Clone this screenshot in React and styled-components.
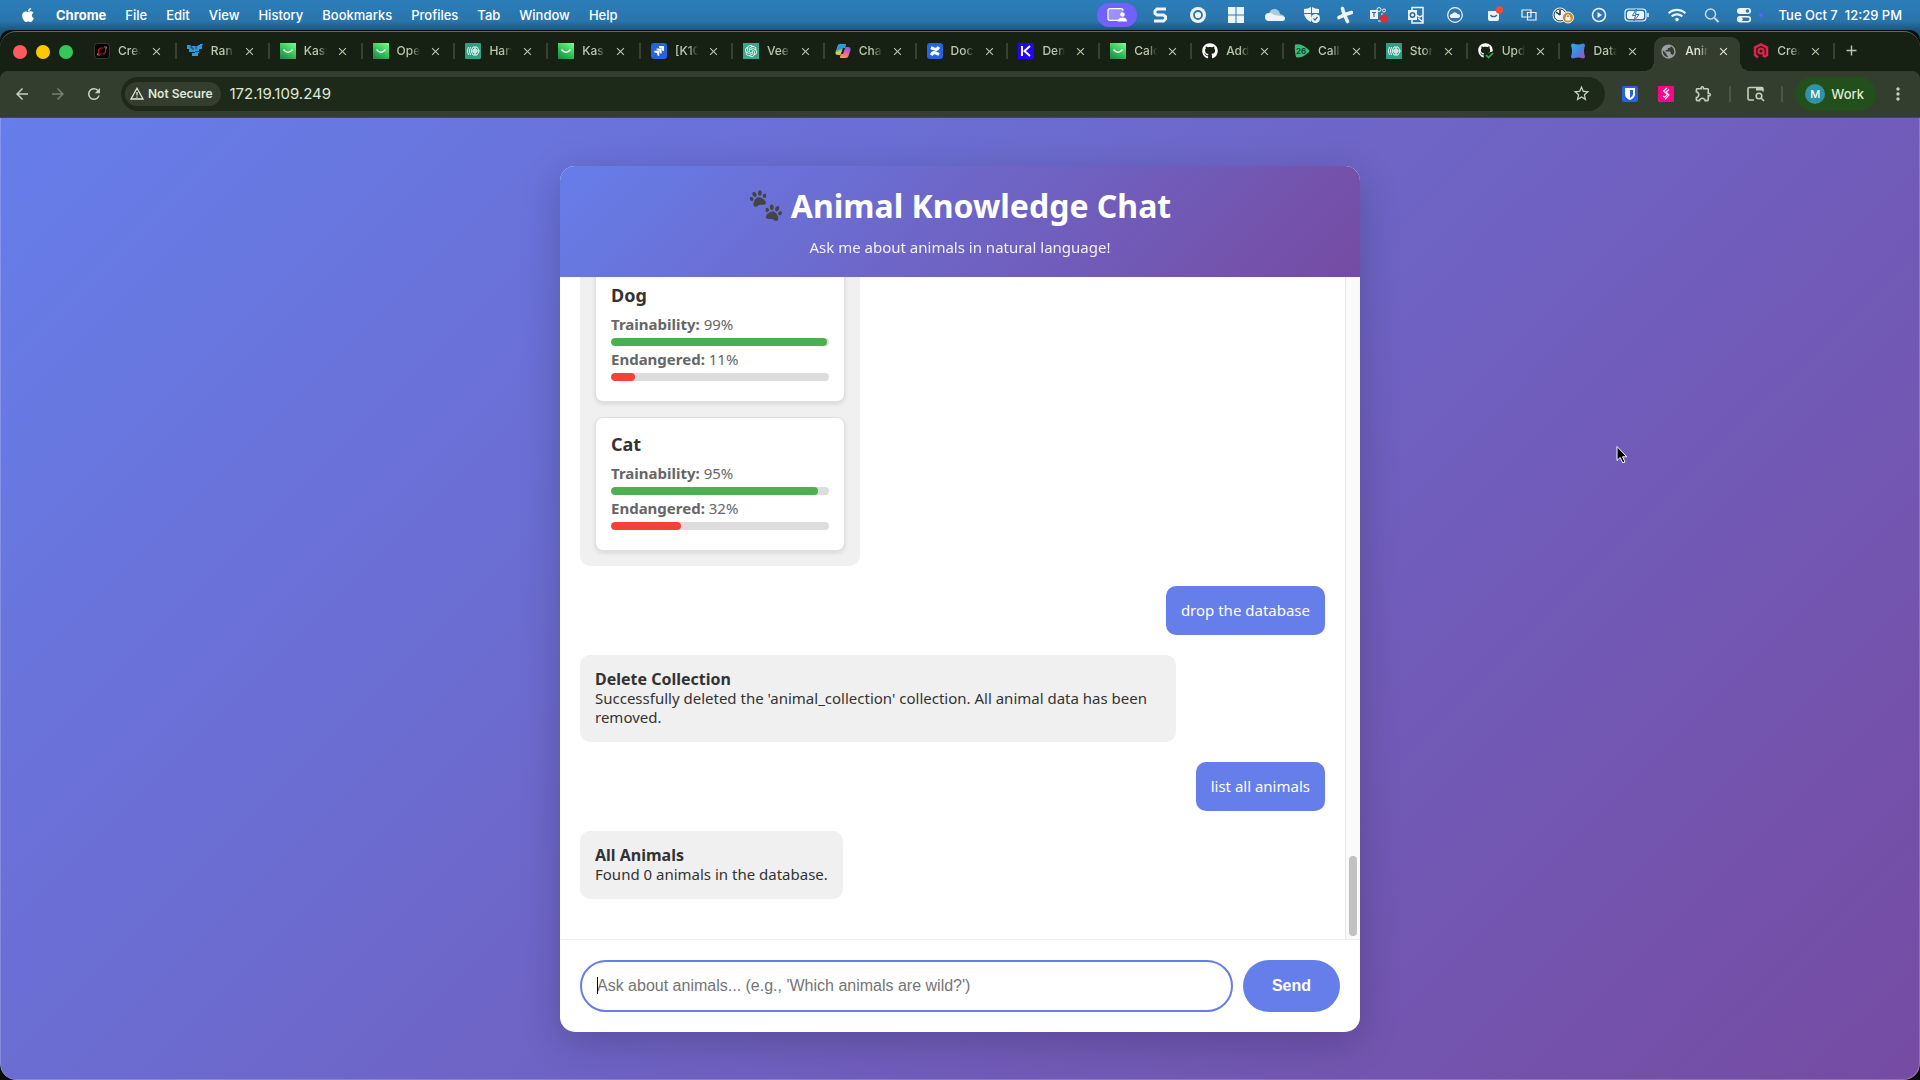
import React from "react";
import styled, { createGlobalStyle } from "styled-components";
import { FaApple, FaGithub, FaPaw, FaWifi } from "react-icons/fa";
import { SiConfluence, SiJira, SiOpenai } from "react-icons/si";
import {
  MdAdd,
  MdArrowBack,
  MdArrowForward,
  MdClose,
  MdMoreVert,
  MdOutlineExtension,
  MdPublic,
  MdRefresh,
  MdStarBorder,
} from "react-icons/md";

const GlobalStyle = createGlobalStyle`
  * {
    box-sizing: border-box;
  }
  body {
    margin: 0;
    font-family: Inter, Roboto, sans-serif;
  }
  button {
    border: none;
    background: none;
    padding: 0;
    font: inherit;
    color: inherit;
  }
  svg {
    display: block;
    flex: none;
  }
  h1, h2, h3, p {
    margin: 0;
  }
`;

const Desktop = styled.div`
  height: 100vh;
  display: flex;
  flex-direction: column;
  background: #1c567e;
  overflow: hidden;
`;

/* ---------- menu bar ---------- */

const MenuBar = styled.header`
  display: flex;
  justify-content: space-between;
  height: 30px;
  padding: 0 18px 0 20px;
  background: linear-gradient(#2b7eb9, #2a75ac 70%, #1c567e);
  color: white;
  font-size: 13px;
  font-weight: 500;
`;
const Menus = styled.nav`
  display: flex;
  align-items: center;
  gap: 19px;
`;
const MenuItem = styled.button`
  margin-left: ${(props) => (props.$bold ? 1 : 0)}px;
  font-weight: ${(props) => (props.$bold ? 700 : 500)};
`;
const Status = styled.div`
  display: flex;
  align-items: center;
`;
const StatusSlot = styled.div`
  display: flex;
  justify-content: center;
  width: ${(props) => props.$width}px;
`;
const SharePill = styled.div`
  display: flex;
  align-items: center;
  justify-content: center;
  width: 40px;
  height: 24px;
  margin-right: 4px;
  border-radius: 12px;
  background: #7161ff;
`;
const Clock = styled.div`
  display: flex;
  gap: 7px;
  margin-left: 16px;
`;

/* ---------- browser window ---------- */

const Backdrop = styled.div`
  flex: 1;
  min-height: 0;
  display: flex;
  background: #0a0c09;
  border-top: 1px solid #0a0c09;
  border-radius: 10px 10px 0 0;
`;
const Window = styled.div`
  flex: 1;
  min-width: 0;
  display: flex;
  flex-direction: column;
  border-top: 1px solid #5e6b59;
  border-radius: 16px;
  overflow: hidden;
  background: #172113;
`;
const TabStrip = styled.div`
  display: flex;
  align-items: center;
  height: 39px;
  padding-left: 13px;
  color: #b9c9af;
`;
const Lights = styled.div`
  display: flex;
  gap: 9px;
  margin-right: 11px;
`;
const Light = styled.span`
  width: 14px;
  height: 14px;
  border-radius: 50%;
  background: ${(props) => props.$color};
`;
const Tabs = styled.div`
  flex: 1;
  display: flex;
  height: 100%;
  align-items: flex-end;
`;
const TabSlot = styled.div`
  flex: ${(props) => (props.$wide ? 93 : 92)} 1 0;
  min-width: 0;
`;
const TabBox = styled.div`
  display: flex;
  align-items: center;
  height: 34px;
  padding: 0 0 6px 10px;
  &::after {
    content: "";
    width: 2px;
    height: 16px;
    margin-left: auto;
    background: ${(props) => (props.$line ? "#38432f" : "transparent")};
  }
`;
const ActiveTabBox = styled.div`
  position: relative;
  display: flex;
  align-items: center;
  height: 34px;
  margin: 0 3px;
  padding: 0 0 6px 6px;
  border-radius: 9px 9px 0 0;
  background: #343e2f;
  color: #dfe8d8;
  &::before,
  &::after {
    content: "";
    position: absolute;
    bottom: 0;
    width: 10px;
    height: 10px;
  }
  &::before {
    right: 100%;
    background: radial-gradient(circle at 0 0, transparent 10px, #343e2f 10px);
  }
  &::after {
    left: 100%;
    background: radial-gradient(circle at 100% 0, transparent 10px, #343e2f 10px);
  }
`;
const TabTitle = styled.span`
  width: 23px;
  margin: 0 9px 0 8px;
  overflow: hidden;
  white-space: nowrap;
  font-size: 12px;
  font-weight: 500;
  line-height: 16px;
  mask-image: linear-gradient(90deg, black 60%, transparent);
`;
const NewTab = styled.button`
  width: 85px;
  padding: 0 0 2px 8px;
`;
const Toolbar = styled.div`
  display: flex;
  align-items: center;
  height: 47px;
  padding: 0 12px 1px 13px;
  background: #343e2f;
  border-bottom: 1px solid #414b3c;
  border-radius: 8px 8px 0 0;
  color: #c3d2ba;
`;
const NavButton = styled.button`
  display: flex;
  width: 18px;
  margin-right: 18px;
  opacity: ${(props) => (props.$dim ? 0.45 : 1)};
`;
const AddressBar = styled.div`
  flex: 1;
  display: flex;
  align-items: center;
  height: 34px;
  margin-right: 17px;
  padding: 0 14px 0 4px;
  border-radius: 17px;
  background: #1e2a19;
`;
const SecurityChip = styled.button`
  display: flex;
  align-items: center;
  gap: 4px;
  height: 24px;
  padding: 0 8px 0 5px;
  border-radius: 12px;
  background: #343e2f;
  color: #dfe8d8;
  font-size: 12px;
  font-weight: 600;
  white-space: nowrap;
`;
const AddressInput = styled.input`
  flex: 1;
  min-width: 0;
  padding: 0;
  margin-left: 9px;
  border: none;
  outline: none;
  background: none;
  color: #dfe8d8;
  font-family: Inter, Roboto, sans-serif;
  font-size: 15px;
`;
const Extensions = styled.div`
  display: flex;
  align-items: center;
  gap: 16px;
`;
const Divider = styled.span`
  width: 2px;
  height: 16px;
  background: #4c5a45;
`;
const Profile = styled.button`
  display: flex;
  align-items: center;
  gap: 6px;
  height: 34px;
  margin: 0 12px 0 -4px;
  padding: 0 12px 0 10px;
  border-radius: 17px;
  background: #234f1c;
  color: #dcecd3;
  font-size: 13px;
  font-weight: 500;
`;
const Avatar = styled.span`
  width: 20px;
  height: 20px;
  border-radius: 50%;
  background: #2d93a5;
  color: white;
  font-size: 11px;
  line-height: 20px;
  text-align: center;
`;

/* ---------- chat page ---------- */

const Page = styled.main`
  flex: 1;
  min-height: 0;
  display: flex;
  align-items: center;
  justify-content: center;
  background: linear-gradient(135deg, #667eea 0%, #764ba2 100%);
  box-shadow:
    inset 1px 0 rgba(255, 255, 255, 0.2),
    inset -1px -1px rgba(255, 255, 255, 0.2);
  border-radius: 0 0 16px 16px;
  font-family: "Noto Sans", Tahoma, sans-serif;
  font-size: 15px;
  line-height: 19px;
  color: #333;
`;
const Chat = styled.section`
  display: flex;
  flex-direction: column;
  width: 90%;
  max-width: 800px;
  height: 90%;
  border-radius: 15px;
  overflow: hidden;
  background: white;
  box-shadow: 0 10px 40px rgba(0, 0, 0, 0.2);
`;
const ChatHeader = styled.div`
  padding: 20px;
  text-align: center;
  color: white;
  background: linear-gradient(135deg, #667eea 0%, #764ba2 100%);
`;
const Title = styled.h1`
  display: flex;
  align-items: center;
  justify-content: center;
  gap: 8px;
  margin-bottom: 13px;
  font-size: 32px;
  line-height: 39px;
`;
const Subtitle = styled.p`
  opacity: 0.9;
`;
const ScrollArea = styled.div`
  flex: 1;
  min-height: 0;
  display: flex;
`;
const Messages = styled.div`
  flex: 1;
  display: flex;
  flex-direction: column;
  justify-content: flex-end;
  gap: 20px;
  padding: 20px 20px 40px;
  overflow: hidden;
`;
const Track = styled.div`
  display: flex;
  flex-direction: column;
  justify-content: flex-end;
  align-items: center;
  width: 15px;
  padding-bottom: 3px;
  border-left: 1px solid #e8e8e8;
  background: #fafafa;
`;
const Thumb = styled.div`
  width: 8px;
  height: 80px;
  border-radius: 4px;
  background: #c1c1c1;
`;
const Bubble = styled.div`
  flex: none;
  align-self: ${(props) => (props.$user ? "flex-end" : "flex-start")};
  max-width: 80%;
  padding: 15px;
  border-radius: 10px;
  background: ${(props) => (props.$user ? "#667eea" : "#f0f0f0")};
  color: ${(props) => (props.$user ? "white" : "#333")};
`;
const BubbleTitle = styled.h2`
  font-size: 16px;
  line-height: 19px;
`;
const CardList = styled(Bubble)`
  display: flex;
  flex-direction: column;
  gap: 15px;
  width: 280px;
`;
const Card = styled.article`
  padding: 15px;
  border: 1px solid #e0e0e0;
  border-radius: 8px;
  background: white;
  box-shadow: 0 2px 4px rgba(0, 0, 0, 0.1);
`;
const CardTitle = styled.h3`
  margin-bottom: 9px;
  font-size: 18px;
  line-height: 23px;
`;
const Stat = styled.div`
  margin-bottom: 5px;
  color: #666;
  font-size: 15px;
  line-height: 17px;
`;
const Bar = styled.div`
  height: 8px;
  margin-top: 5px;
  border-radius: 4px;
  overflow: hidden;
  background: #ddd;
`;
const Fill = styled.div`
  height: 100%;
  border-radius: 4px;
  background: ${(props) => props.$color};
`;
const Composer = styled.form`
  display: flex;
  gap: 10px;
  padding: 20px;
  border-top: 1px solid #eee;
`;
const Field = styled.div`
  position: relative;
  flex: 1;
  display: flex;
`;
const Caret = styled.span`
  position: absolute;
  left: 17px;
  top: 17px;
  width: 1px;
  height: 17px;
  background: black;
`;
const Question = styled.input`
  flex: 1;
  height: 52px;
  padding: 0 15px;
  border: 2px solid #667eea;
  border-radius: 26px;
  outline: none;
  font-family: "Liberation Sans", Arial, sans-serif;
  font-size: 16px;
  &::placeholder {
    color: #757575;
  }
`;
const Send = styled.button`
  width: 97px;
  border-radius: 26px;
  background: #667eea;
  color: white;
  font-family: "Liberation Sans", Arial, sans-serif;
  font-size: 16px;
  font-weight: 700;
`;
const Pointer = styled.svg`
  position: absolute;
  left: 1616px;
  top: 441px;
`;

/* ---------- favicons ---------- */

const Tile = styled.span`
  display: flex;
  flex: none;
  align-items: center;
  justify-content: center;
  width: 16px;
  height: 16px;
  border-radius: ${(props) => props.$radius || 0}px;
  background: ${(props) => props.$bg};
  color: white;
`;
const ExtensionTile = styled(Tile)`
  margin-right: 4px;
`;

const Loop = () => (
  <svg width="16" height="16" viewBox="0 0 16 16" fill="none">
    <rect x="0.5" y="0.5" width="15" height="15" rx="3" fill="#050505" stroke="#3a3a3a" />
    <path d="M4.500 11V8a3 3 0 0 1 2.500-3h2.500" stroke="#c1121f" strokeWidth="1.200" />
    <path d="M11.500 5v3A3 3 0 0 1 9 11H6" stroke="#c1121f" strokeWidth="1.200" />
    <path d="M10 4h2.500v1.500M3.500 10.500V12H6" stroke="#9aa" strokeWidth="0.800" />
  </svg>
);
const Blocks = () => (
  <svg width="16" height="16" viewBox="0 0 16 16" fill="#3298dc">
    <path d="M0 2h4v1h7V2h2V1h3v1h-1v4h-3v4h-1v3H5v-3h3V9H2V6H0z" />
    <path d="M4 2v3h2v2M8 8.500h4M9 3v3" stroke="#172113" strokeWidth="0.700" fill="none" />
  </svg>
);
const Smile = () => (
  <svg width="16" height="16" viewBox="0 0 16 16">
    <defs>
      <linearGradient id="smile" x1="0.800" y1="0" x2="0.200" y2="1">
        <stop offset="0" stopColor="#6dfb83" />
        <stop offset="0.500" stopColor="#35c559" />
        <stop offset="1" stopColor="#1f8d4d" />
      </linearGradient>
    </defs>
    <rect width="16" height="16" fill="url(#smile)" />
    <path d="M3.500 6.500 5 8q3 2.500 6 0l1.500-1.500" fill="none" stroke="white" strokeWidth="1.500" />
  </svg>
);
const Mesh = ({ round }) => (
  <Tile $bg="#2fa084" $radius={round ? 1 : 0}>
    <svg width="14" height="14" viewBox="0 0 14 14" fill="none" stroke="white" strokeWidth="0.900">
      <path d="M2.500 3Q0 7 2.500 11M4.500 3Q2 7 4.500 11" />
      <path d="M7 3h4l2.300 4L11 11H7L5 7z" />
      <path d="M5 7h8M9 3v8" />
      <circle cx="9" cy="7" r="2" />
    </svg>
  </Tile>
);
const Copilot = () => (
  <svg width="16" height="16" viewBox="0 0 16 16">
    <defs>
      <linearGradient id="cool" x1="0" y1="0" x2="0.300" y2="1">
        <stop offset="0" stopColor="#22b5e8" />
        <stop offset="0.500" stopColor="#3a8bd8" />
        <stop offset="0.750" stopColor="#c3d94e" />
        <stop offset="1" stopColor="#f6b93b" />
      </linearGradient>
      <linearGradient id="warm" x1="0.600" y1="0" x2="0.200" y2="1">
        <stop offset="0" stopColor="#8a5be8" />
        <stop offset="0.500" stopColor="#f2619f" />
        <stop offset="1" stopColor="#ff9a4a" />
      </linearGradient>
    </defs>
    <path d="M5 1h5q1.500 0 1 1.500L10 5H8L5.500 12H3Q0 12 .5 9L2.500 3Q3 1 5 1z" fill="url(#cool)" />
    <path d="M11 15H6q-1.500 0-1-1.500L6 11h2l2.500-7H13q3 0 2.500 3l-2 6q-.5 2-2.500 2z" fill="url(#warm)" />
  </svg>
);
const LetterK = () => (
  <Tile $bg="#2203ff">
    <svg width="12" height="12" viewBox="0 0 12 12" fill="none" stroke="white" strokeWidth="2">
      <path d="M2 1v10M10 1 4.500 6l5.500 5" />
    </svg>
  </Tile>
);
const Github = () => <FaGithub size={16} color="white" />;
const GithubDone = () => (
  <svg width="16" height="16" viewBox="0 0 16 16">
    <FaGithub size={15} color="white" />
    <path d="M6 16V11l10-3v8z" fill="#172113" />
    <path d="m8 12 2.500 2.500L15 10" fill="none" stroke="#2fb344" strokeWidth="1.600" />
  </svg>
);
const Numbered = () => (
  <svg width="16" height="16" viewBox="0 0 16 16">
    <path d="M1 1.500Q8 0 15 7q1 1 0 2Q9 15 3 14.500 2 14.500 1.500 12 0 6 1 1.500z" fill="#3bb878" />
    <text x="2" y="11" fontSize="8" fontWeight="600" fontFamily="Inter, sans-serif" fill="#173a27">
      26
    </text>
  </svg>
);
const Spark = () => (
  <svg width="16" height="16" viewBox="0 0 16 16">
    <defs>
      <linearGradient id="spark" x1="0" y1="0" x2="1" y2="1">
        <stop offset="0" stopColor="#22b4e6" />
        <stop offset="0.550" stopColor="#4d7fe0" />
        <stop offset="1" stopColor="#a94fae" />
      </linearGradient>
    </defs>
    <path
      d="M3 .5q2.500 1 5 1t5-1q2 0 2 2Q14 5 14 8t1 5.500q0 2-2 2-2.500-1-5-1t-5 1q-2 0-2-2Q2 11 2 8T1 2.500q0-2 2-2z"
      fill="url(#spark)"
    />
  </svg>
);
const Hexagon = () => (
  <svg width="16" height="16" viewBox="0 0 16 16" fill="none" stroke="#e0234e" strokeWidth="2.500">
    <path d="M5 14.500 2 12V4.500l6-3 6 3V12l-3 2" />
    <circle cx="8" cy="8" r="2.500" strokeWidth="2" />
    <path d="M10.500 8v6" strokeWidth="2" />
  </svg>
);

const tabs = [
  { title: "Crea", icon: <Loop /> },
  { title: "Ran", icon: <Blocks /> },
  { title: "Kast", icon: <Smile /> },
  { title: "Ope", icon: <Smile /> },
  { title: "Harv", icon: <Mesh round /> },
  { title: "Kas", icon: <Smile /> },
  { title: "[K10", icon: <Tile $bg="#2563df" $radius={3}><SiJira size={10} /></Tile> },
  { title: "Vee", icon: <Tile $bg="#37a888"><SiOpenai size={12} /></Tile> },
  { title: "Cha", icon: <Copilot /> },
  { title: "Doc", icon: <Tile $bg="#2563df" $radius={3}><SiConfluence size={10} /></Tile> },
  { title: "Den", icon: <LetterK /> },
  { title: "Calc", icon: <Smile /> },
  { title: "Add", icon: <Github /> },
  { title: "Call", icon: <Numbered /> },
  { title: "Stor", icon: <Mesh /> },
  { title: "Upd", icon: <GithubDone /> },
  { title: "Data", icon: <Spark /> },
  { title: "Anim", icon: <MdPublic size={17} color="#9aa0a6" />, active: true },
  { title: "Crea", icon: <Hexagon /> },
];

/* ---------- status icons ---------- */

const Glyph = ({ width = 16, children }) => (
  <svg
    width={width}
    height="18"
    viewBox={`0 0 ${width} 18`}
    fill="none"
    stroke="#eef5fa"
    strokeWidth="1.500"
  >
    {children}
  </svg>
);
const solid = { fill: "#eef5fa", stroke: "none" };

const statusIcons = [
  {
    width: 38,
    icon: (
      <Glyph>
        <path d="M14 3H5L3 5v2.500L5 9h6.500l2 1.500V13l-2 2H2" strokeWidth="3" />
      </Glyph>
    ),
  },
  {
    width: 38,
    icon: (
      <Glyph>
        <circle cx="8" cy="9" r="8" {...solid} />
        <circle cx="8" cy="9" r="4" stroke="#2a77af" strokeWidth="1.800" />
      </Glyph>
    ),
  },
  {
    width: 38,
    icon: (
      <Glyph>
        <path d="M0 1h7.500v7.500H0zM8.500 1H16v7.500H8.500zM0 9.500h7.500V17H0zM8.500 9.500H16V17H8.500z" {...solid} />
      </Glyph>
    ),
  },
  {
    width: 40,
    icon: (
      <Glyph width={20}>
        <path d="M4 9a5.500 5.500 0 0 1 11-1q5 1 5 5l-9-1z" fill="#a9cbe2" stroke="none" />
        <path d="M4 15a4 4 0 0 1 0-8q3-.5 5 2l7 1q4 0 4 2.500T17 15z" {...solid} />
      </Glyph>
    ),
  },
  {
    width: 34,
    icon: (
      <Glyph>
        <path d="M7 1v6H0V3q4 0 7-2zM8 1q3 2 7 2v4H8zM0 8h7v8q-6-3-7-8z" {...solid} />
        <circle cx="11.500" cy="12.500" r="4.500" {...solid} />
        <path d="m9.500 12.500 1.500 1.500 2.500-3" stroke="#2a6c9e" strokeWidth="1.200" />
      </Glyph>
    ),
  },
  {
    width: 32,
    icon: (
      <Glyph>
        <path d="M5.500 2.500q1 5 5 13M2 11.500q6-3.500 12.500-5" strokeWidth="3.600" strokeLinecap="round" />
      </Glyph>
    ),
  },
  {
    width: 36,
    icon: (
      <Glyph width={18}>
        <path d="M0 4h8v9H0z" {...solid} />
        <path d="M2 6.500h4M4 6.500V11" stroke="#2a6c9e" strokeWidth="1.200" />
        <circle cx="9" cy="3.500" r="2" strokeWidth="1" />
        <circle cx="14" cy="4.500" r="1.500" strokeWidth="1" />
        <path d="M8 15h4V7" strokeWidth="1" />
        <circle cx="14" cy="12.500" r="4" fill="#d92f35" stroke="none" />
      </Glyph>
    ),
  },
  {
    width: 38,
    icon: (
      <Glyph>
        <path d="M4 1.500h11V17H4zM8 9l4 2 3-2M15 16l-5-4" />
        <path d="M0 4h9v10H0z" {...solid} />
        <circle cx="4.500" cy="9" r="2.200" stroke="#2a6c9e" />
      </Glyph>
    ),
  },
  {
    width: 40,
    icon: (
      <Glyph>
        <circle cx="8" cy="9" r="7.300" strokeWidth="1.200" />
        <path d="M4.500 12a2 2 0 0 1 .5-4 3 3 0 0 1 5.500 0 2 2 0 0 1 1 4z" {...solid} />
      </Glyph>
    ),
  },
  {
    width: 40,
    icon: (
      <Glyph>
        <path d="M1 5h11v8q0 2-2 2H3q-2 0-2-2z" {...solid} />
        <path d="m3.500 9 1.500 1.500h3L10 9" stroke="#2a6c9e" />
        <circle cx="12.500" cy="4" r="3.800" fill="#f04b3c" stroke="none" />
      </Glyph>
    ),
  },
  {
    width: 28,
    icon: (
      <Glyph>
        <path d="M1 4h9v7H1zM6.500 6.500H15V14H6.500z" strokeWidth="1.200" />
      </Glyph>
    ),
  },
  {
    width: 40,
    icon: (
      <Glyph width={22}>
        <circle cx="8" cy="9" r="7.500" {...solid} />
        <circle cx="8" cy="9" r="6" stroke="#1b3040" strokeWidth="1" />
        <path d="M8 9V4M8 9 4 6" stroke="#1b3040" />
        <circle cx="16" cy="11.500" r="5.500" fill="#c98a35" stroke="#eef5fa" strokeWidth="1" />
        <path d="M14.500 11V9.500q1.500-2 3 0V11" stroke="white" strokeWidth="0.800" />
        <path d="M13.500 11h5v3.500h-5z" fill="white" stroke="none" />
      </Glyph>
    ),
  },
  {
    width: 32,
    icon: (
      <Glyph>
        <circle cx="8" cy="9" r="6.500" />
        <path d="M6.500 6v6l4.500-3z" {...solid} />
      </Glyph>
    ),
  },
  {
    width: 44,
    icon: (
      <Glyph width={26}>
        <rect x="1" y="3" width="21" height="12" rx="3.500" strokeWidth="1.200" />
        <rect x="3" y="5" width="17" height="8" rx="2" {...solid} />
        <path d="m12.500 3-4 6.500h3L10 15l5-6.500h-3.500z" fill="#eef5fa" stroke="#2a77af" strokeWidth="1" />
        <path d="M24 7v4" />
      </Glyph>
    ),
  },
  { width: 36, icon: <FaWifi size={18} color="#eef5fa" /> },
  {
    width: 34,
    icon: (
      <Glyph>
        <circle cx="6.500" cy="8" r="5" stroke="#c4dbea" />
        <path d="m10.500 12 4 4" stroke="#c4dbea" strokeWidth="2" />
      </Glyph>
    ),
  },
  {
    width: 30,
    icon: (
      <Glyph>
        <rect x="1" y="2" width="14" height="6" rx="3" {...solid} />
        <circle cx="11.500" cy="5" r="1.800" fill="#2a77af" stroke="none" />
        <rect x="1.700" y="10.700" width="12.600" height="5" rx="2.500" />
        <circle cx="4.500" cy="13.200" r="2.200" {...solid} />
      </Glyph>
    ),
  },
];

const menus = ["File", "Edit", "View", "History", "Bookmarks", "Profiles", "Tab", "Window", "Help"];

const animals = [
  { name: "Dog", trainability: 99, endangered: 11 },
  { name: "Cat", trainability: 95, endangered: 32 },
];

const TopMenu = () => (
  <MenuBar>
    <Menus>
      <FaApple size={16} />
      <MenuItem $bold>Chrome</MenuItem>
      {menus.map((menu) => (
        <MenuItem key={menu}>{menu}</MenuItem>
      ))}
    </Menus>
    <Status>
      <SharePill>
        <svg width="20" height="16" viewBox="0 0 20 16" fill="none" stroke="white" strokeWidth="1.300">
          <path d="M12 13.300H3q-2 0-2-2V3.700q0-2 2-2h11q2 0 2 2" fill="#9b90ff" />
          <circle cx="15.500" cy="7.500" r="2.300" fill="white" stroke="none" />
          <path d="M11 14.500q0-4 4.500-4t4.500 4z" fill="white" stroke="none" />
        </svg>
      </SharePill>
      {statusIcons.map((item, index) => (
        <StatusSlot key={index} $width={item.width}>
          {item.icon}
        </StatusSlot>
      ))}
      <svg width="4" height="4" viewBox="0 0 4 4">
        <circle cx="2" cy="2" r="2" fill="#6a5cff" />
      </svg>
      <Clock>
        <span>Tue Oct 7</span>
        <span>12:29 PM</span>
      </Clock>
    </Status>
  </MenuBar>
);

const Tab = ({ tab, line, wide }) => {
  const Box = tab.active ? ActiveTabBox : TabBox;
  return (
    <TabSlot $wide={wide}>
      <Box $line={line}>
        {tab.icon}
        <TabTitle>{tab.title}</TabTitle>
        <button aria-label="Close tab">
          <MdClose size={13} />
        </button>
      </Box>
    </TabSlot>
  );
};

const BrowserBars = () => (
  <>
    <TabStrip>
      <Lights>
        <Light $color="#ff5a5f" />
        <Light $color="#fdc800" />
        <Light $color="#35c759" />
      </Lights>
      <Tabs>
        {tabs.map((tab, index) => (
          <Tab
            key={index}
            tab={tab}
            wide={index < 6}
            line={!(tabs[index + 1] && tabs[index + 1].active)}
          />
        ))}
      </Tabs>
      <NewTab aria-label="New tab">
        <MdAdd size={17} />
      </NewTab>
    </TabStrip>
    <Toolbar>
      <NavButton aria-label="Back">
        <MdArrowBack size={18} />
      </NavButton>
      <NavButton aria-label="Forward" $dim>
        <MdArrowForward size={18} />
      </NavButton>
      <NavButton aria-label="Reload">
        <MdRefresh size={18} />
      </NavButton>
      <AddressBar>
        <SecurityChip>
          <svg width="14" height="13" viewBox="0 0 14 13" fill="none" stroke="#dfe8d8" strokeWidth="1.300">
            <path d="M7 1.300 13 12H1z" />
            <path d="M7 5v3.500M7 9.500v1.200" />
          </svg>
          Not Secure
        </SecurityChip>
        <AddressInput aria-label="Address" defaultValue="172.19.109.249" />
        <MdStarBorder size={19} />
      </AddressBar>
      <Extensions>
        <ExtensionTile $bg="#2563df" $radius={2}>
          <svg width="12" height="14" viewBox="0 0 12 14">
            <path d="M1 1h10v6q0 4-5 6-5-2-5-6z" fill="white" />
            <path d="M6 3h3v4q0 2.500-3 4z" fill="#2563df" />
          </svg>
        </ExtensionTile>
        <ExtensionTile $bg="#f4078f">
          <svg width="10" height="14" viewBox="0 0 10 14" fill="none" stroke="white" strokeWidth="1.100">
            <path d="M6 1 2.500 4l4 3.500L4 10M8 2.500 5 5l3 3-4 4.500M2 9l2 1.500" />
          </svg>
        </ExtensionTile>
        <MdOutlineExtension size={19} />
        <Divider />
        <svg width="18" height="16" viewBox="0 0 18 16" fill="none" stroke="#c3d2ba" strokeWidth="1.600">
          <path d="M7 14H2.500Q1 14 1 12.500v-10Q1 1.500 2.500 1.500h12q1.500 0 1.500 1.500v2.500" />
          <path d="M9 1h7v3.500H9z" fill="#c3d2ba" stroke="none" />
          <circle cx="12" cy="10" r="2.800" />
          <path d="m14 12 3 3" />
        </svg>
        <Divider />
        <Profile>
          <Avatar>M</Avatar>
          Work
        </Profile>
      </Extensions>
      <button aria-label="Menu">
        <MdMoreVert size={20} />
      </button>
    </Toolbar>
  </>
);

const AnimalStat = ({ label, value, color }) => (
  <Stat>
    <strong>{label}:</strong> {value}%
    <Bar>
      <Fill $color={color} style={{ width: `${value}%` }} />
    </Bar>
  </Stat>
);

const AnimalCard = ({ animal }) => (
  <Card>
    <CardTitle>{animal.name}</CardTitle>
    <AnimalStat label="Trainability" value={animal.trainability} color="#4caf50" />
    <AnimalStat label="Endangered" value={animal.endangered} color="#f44336" />
  </Card>
);

const Paws = () => (
  <svg width="34" height="34" viewBox="0 0 34 34">
    <g transform="rotate(-14 9 10)">
      <FaPaw x={1} y={1} size={17} color="#444" />
    </g>
    <g transform="rotate(14 24 23)">
      <FaPaw x={16} y={15} size={17} color="#444" />
    </g>
  </svg>
);

const ChatWindow = () => (
  <Chat>
    <ChatHeader>
      <Title>
        <Paws />
        Animal Knowledge Chat
      </Title>
      <Subtitle>Ask me about animals in natural language!</Subtitle>
    </ChatHeader>
    <ScrollArea>
      <Messages>
        <CardList>
          {animals.map((animal) => (
            <AnimalCard key={animal.name} animal={animal} />
          ))}
        </CardList>
        <Bubble $user>drop the database</Bubble>
        <Bubble>
          <BubbleTitle>Delete Collection</BubbleTitle>
          Successfully deleted the 'animal_collection' collection. All animal data has been removed.
        </Bubble>
        <Bubble $user>list all animals</Bubble>
        <Bubble>
          <BubbleTitle>All Animals</BubbleTitle>
          Found 0 animals in the database.
        </Bubble>
      </Messages>
      <Track>
        <Thumb />
      </Track>
    </ScrollArea>
    <Composer onSubmit={(e) => e.preventDefault()}>
      <Field>
        <Question
          aria-label="Question"
          placeholder="Ask about animals... (e.g., 'Which animals are wild?')"
        />
        <Caret />
      </Field>
      <Send>Send</Send>
    </Composer>
  </Chat>
);

const App = () => {
  return (
    <>
      <GlobalStyle />
      <Desktop>
        <TopMenu />
        <Backdrop>
          <Window>
            <BrowserBars />
            <Page>
              <ChatWindow />
            </Page>
          </Window>
        </Backdrop>
      </Desktop>
      <Pointer width="14" height="22" viewBox="0 0 14 22">
        <path
          d="M1 1.500v14l3.200-3 2.600 5.500 2.200-1-2.500-5.200h4.300z"
          transform="translate(0 4)"
          fill="black"
          stroke="white"
          strokeWidth="1"
        />
      </Pointer>
    </>
  );
};

export default App;
